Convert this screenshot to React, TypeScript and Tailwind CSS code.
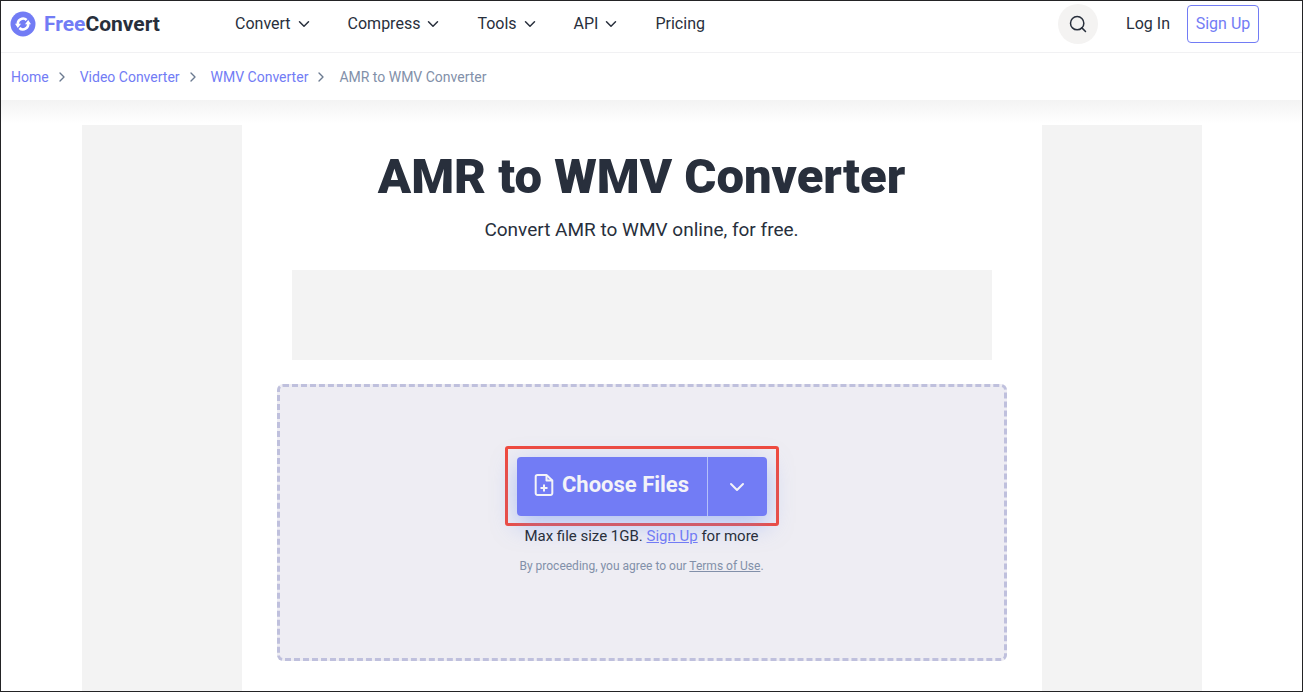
import type { ReactNode } from "react";
import { ChevronDown, ChevronRight, Search } from "lucide-react";

const menus = ["Convert", "Compress", "Tools", "API"];

const crumbs = ["Home", "Video Converter", "WMV Converter"];

function Logo() {
  return (
    <a href="#" className="flex items-center gap-2 text-[21px] leading-6 font-bold text-[#282f3c]">
      <svg viewBox="0 0 26 26" className="size-[26px]" fill="none" aria-hidden="true">
        <circle cx="13" cy="13" r="12.5" fill="#727cf5" />
        <path d="M8 14a5.200 5.200 0 0 1 8.600-5M18 12a5.200 5.200 0 0 1-8.600 5" stroke="#fff" strokeWidth="2.6" />
        <path d="M5 12.800h6l-3.200 4.200zM21 13.200h-6l3.200-4.200z" fill="#fff" />
      </svg>
      <span>
        <span className="text-[#727cf5]">Free</span>Convert
      </span>
    </a>
  );
}

function Header() {
  return (
    <header className="flex h-[52px] items-center border-b border-[#f1f1f3] pr-[43px] pb-[6px] pl-[9px]">
      <div className="w-[225px] shrink-0">
        <Logo />
      </div>
      <nav className="flex items-center gap-[35px] text-base">
        {menus.map((label) => (
          <button key={label} type="button" className="flex items-center gap-1">
            {label}
            <ChevronDown size={18} strokeWidth={2} />
          </button>
        ))}
        <a href="#">Pricing</a>
      </nav>
      <div className="ml-auto flex items-center text-base">
        <button type="button" aria-label="Search" className="flex size-10 items-center justify-center rounded-full bg-[#f4f3f2]">
          <Search size={20} strokeWidth={1.8} />
        </button>
        <a href="#" className="ml-7">Log In</a>
        <a href="#" className="ml-[17px] flex h-[38px] w-[72px] items-center justify-center rounded border border-[#727cf5] text-[#727cf5]">
          Sign Up
        </a>
      </div>
    </header>
  );
}

function Breadcrumbs() {
  return (
    <nav aria-label="Breadcrumb" className="flex h-[47px] items-center pl-[10px] text-sm text-[#8290a9]">
      {crumbs.map((label) => (
        <span key={label} className="flex items-center">
          <a href="#" className="text-[#727cf5]">{label}</a>
          <ChevronRight size={16} className="mr-[10px] ml-[5px] text-[#6b7a90]" />
        </span>
      ))}
      <span>AMR to WMV Converter</span>
    </nav>
  );
}

function DropZone({ children }: { children: ReactNode }) {
  return (
    <section className="mt-6 flex h-[277px] w-full max-w-[730px] flex-col items-center rounded-md border-[3px] border-dashed border-[#bfc0dd] bg-[#eeedf3] pt-[59px]">
      {children}
    </section>
  );
}

function ChooseFiles() {
  return (
    <div className="rounded-[3px] border-[3px] border-[#f04a3e] px-[9px] pt-2 pb-[7px]">
      <div className="flex h-[59px] rounded text-[#f3f3f8] shadow-[0_8px_24px_rgba(114,150,245,0.5)]">
        <button type="button" className="flex w-[190px] items-center justify-center gap-2 rounded-l bg-[#727cf5] pb-1 text-[22px] font-bold">
          <svg viewBox="0 0 20 24" className="h-6 w-5" fill="none" stroke="currentColor" strokeWidth="2" strokeLinejoin="round" aria-hidden="true">
            <path d="M12.5 2H3.5A1.8 1.8 0 0 0 1.700 3.800v16.400A1.800 1.800 0 0 0 3.500 22h13a1.800 1.800 0 0 0 1.800-1.800V7.500z" />
            <path d="M12.500 2v5.500h5.800M10 11.500v7M6.500 15h7" />
          </svg>
          Choose Files
        </button>
        <button type="button" aria-label="More sources" className="flex w-[60px] items-center justify-center rounded-r border-l border-[#b4c0fa] bg-[#727cf5]">
          <ChevronDown size={24} />
        </button>
      </div>
    </div>
  );
}

export default function App() {
  return (
    <div className="flex min-h-screen flex-col border border-[#232325] bg-white text-[#282f3c] font-[Roboto,'Liberation_Sans',sans-serif]">
      <Header />
      <Breadcrumbs />
      <div className="flex grow justify-center bg-linear-to-b from-[#f3f3f3] to-white to-[24px] pt-[25px] pr-5">
        <aside className="w-40 shrink-0 bg-[#f3f3f3]" />
        <main className="flex w-[800px] flex-col items-center px-[35px] pb-[30px]">
          <h1 className="mt-[22px] text-[49px] leading-[60px] font-black whitespace-nowrap">AMR to WMV Converter</h1>
          <p className="mt-[9px] text-[19px] leading-7">Convert AMR to WMV online, for free.</p>
          <div className="mt-[26px] h-[90px] w-full max-w-[700px] bg-[#f3f3f3]" />
          <DropZone>
            <ChooseFiles />
            <p className="text-[15px] leading-5">
              Max file size 1GB. <a href="#" className="text-[#727cf5] underline">Sign Up</a> for more
            </p>
            <p className="mt-3 text-xs leading-4 text-[#8290a9]">
              By proceeding, you agree to our <a href="#" className="underline">Terms of Use</a>.
            </p>
          </DropZone>
        </main>
        <aside className="w-40 shrink-0 bg-[#f3f3f3]" />
      </div>
    </div>
  );
}
